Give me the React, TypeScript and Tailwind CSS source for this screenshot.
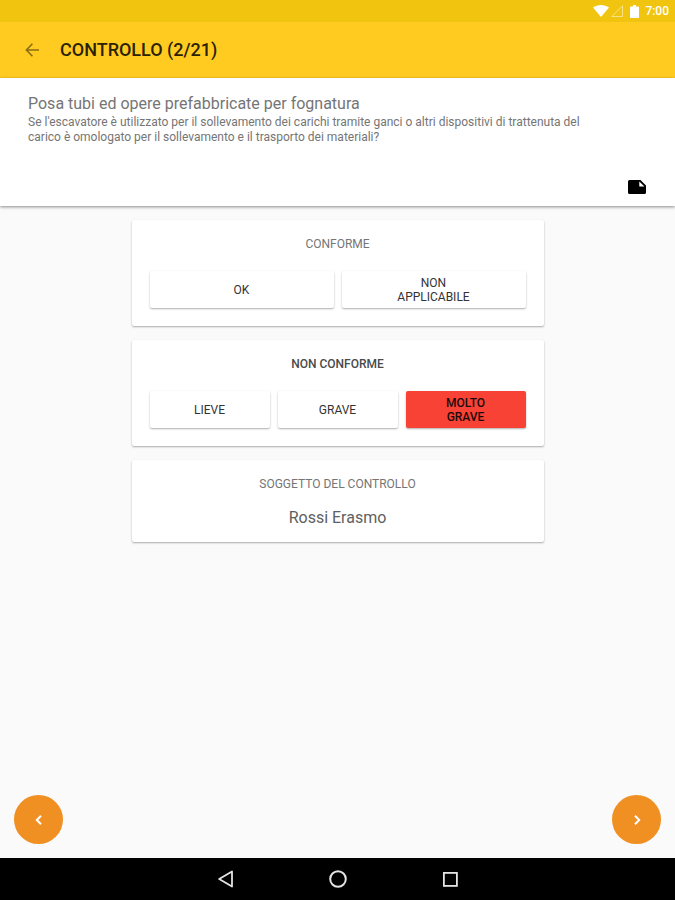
import type { ReactNode } from 'react';

interface ChoiceButtonProps {
  label: string;
  selected?: boolean;
}

interface CardProps {
  title: string;
  titleClassName?: string;
  children: ReactNode;
}

function ChoiceButton({ label, selected = false }: ChoiceButtonProps) {
  return (
    <button
      type="button"
      aria-pressed={selected}
      className={`flex h-[37px] flex-1 items-center justify-center rounded-xs text-center text-[12px] leading-[14px] shadow-[0_1px_2px_rgba(0,0,0,0.32)] ${
        selected ? 'bg-[#f94236] font-medium text-[#1c0a08]' : 'bg-white text-[#333333]'
      }`}
    >
      <span className="max-w-[76px]">{label}</span>
    </button>
  );
}

function Card({ title, titleClassName = 'text-[#757575]', children }: CardProps) {
  return (
    <section className="rounded-xs bg-white px-[18px] pt-[17px] shadow-[0_1px_2px_rgba(0,0,0,0.32)]">
      <h2 className={`text-center text-[12px] leading-[14px] ${titleClassName}`}>{title}</h2>
      {children}
    </section>
  );
}

function StatusBar() {
  return (
    <div className="flex h-[22px] items-center justify-end bg-[#f1c40f] pr-[6px] text-white">
      <svg className="h-3 w-4" viewBox="0 0 16 12" fill="currentColor" aria-hidden="true">
        <path d="M0 2.6C4.6-.8 11.4-.8 16 2.6L8 12Z" />
      </svg>
      <svg className="ml-[2px] h-3 w-3" viewBox="0 0 12 12" fill="none" stroke="currentColor" strokeOpacity="0.5" aria-hidden="true">
        <path d="M11.5 .8V11.5H.8Z" />
      </svg>
      <svg className="ml-[7px] h-[13px] w-[9px]" viewBox="0 0 9 13" fill="currentColor" aria-hidden="true">
        <path d="M3 0h3v1.4H8.3q.7 0 .7.7V12.3q0 .7-.7.7H.7Q0 13 0 12.3V2.1q0-.7.7-.7H3Z" />
      </svg>
      <span className="ml-[6px] text-[12px] font-medium leading-4">7:00</span>
    </div>
  );
}

function AppBar() {
  return (
    <header className="flex h-[56px] items-center bg-[#ffcb21] px-6">
      <button type="button" aria-label="Indietro" className="text-[#8a6d12]">
        <svg className="h-4 w-4" viewBox="0 0 16 16" fill="none" stroke="currentColor" strokeWidth="1.6" aria-hidden="true">
          <path d="M15 8H2.8M8.4 1.8L2.4 8l6 6.2" />
        </svg>
      </button>
      <h1 className="ml-5 text-[18px] font-medium leading-6 text-[#2b2204]">CONTROLLO (2/21)</h1>
    </header>
  );
}

function NavigationBar() {
  return (
    <nav className="flex h-[42px] items-center justify-center gap-24 bg-black text-[#e4e4e4]">
      <button type="button" aria-label="Indietro">
        <svg className="h-5 w-4" viewBox="0 0 16 20" fill="none" stroke="currentColor" strokeWidth="1.8" strokeLinejoin="round" aria-hidden="true">
          <path d="M14 2.5v15L1.2 10Z" />
        </svg>
      </button>
      <button type="button" aria-label="Home">
        <svg className="h-5 w-4 overflow-visible" viewBox="0 0 16 20" fill="none" stroke="currentColor" strokeWidth="2" aria-hidden="true">
          <circle cx="8" cy="10" r="7.8" />
        </svg>
      </button>
      <button type="button" aria-label="Recenti">
        <svg className="h-5 w-4" viewBox="0 0 16 20" fill="none" stroke="currentColor" strokeWidth="1.8" aria-hidden="true">
          <rect x="1.9" y="3.9" width="13" height="13" />
        </svg>
      </button>
    </nav>
  );
}

export default function App() {
  return (
    <div className="flex min-h-screen flex-col bg-[#fafafa] font-[Roboto,sans-serif]">
      <StatusBar />
      <AppBar />

      <section className="bg-white px-7 pb-[11px] pt-4 text-[#757575] shadow-[0_1px_3px_rgba(0,0,0,0.45)]">
        <h2 className="text-[16px] leading-5">Posa tubi ed opere prefabbricate per fognatura</h2>
        <p className="mt-px max-w-[570px] text-[12px] leading-[15px]">
          Se l'escavatore è utilizzato per il sollevamento dei carichi tramite ganci o altri dispositivi di trattenuta del
          carico è omologato per il sollevamento e il trasporto dei materiali?
        </p>
        <div className="mt-[34px] flex justify-end">
          <button type="button" aria-label="Nota" className="text-black">
            <svg className="h-4 w-5" viewBox="0 0 20 16" aria-hidden="true">
              <path
                fill="currentColor"
                fillRule="evenodd"
                d="M2.5 1H13.5L19 6.5V13.5Q19 15 17.5 15H2.5Q1 15 1 13.5V2.5Q1 1 2.5 1ZM12.3 2.4V7.5H17.4Z"
              />
            </svg>
          </button>
        </div>
      </section>

      <main className="mx-auto mt-[14px] flex w-full max-w-[412px] flex-1 flex-col gap-[14px]">
        <Card title="CONFORME">
          <div className="mt-5 flex gap-2 pb-[18px]">
            <ChoiceButton label="OK" />
            <ChoiceButton label="NON APPLICABILE" />
          </div>
        </Card>
        <Card title="NON CONFORME" titleClassName="font-medium text-[#4a4a4a]">
          <div className="mt-5 flex gap-2 pb-[18px]">
            <ChoiceButton label="LIEVE" />
            <ChoiceButton label="GRAVE" />
            <ChoiceButton label="MOLTO GRAVE" selected />
          </div>
        </Card>
        <Card title="SOGGETTO DEL CONTROLLO">
          <p className="pb-[14px] pt-[17px] text-center text-[16px] leading-5 text-[#606060]">Rossi Erasmo</p>
        </Card>
      </main>

      <div className="flex justify-between px-[14px] pb-[14px] text-white">
        <button type="button" aria-label="Precedente" className="flex size-[49px] items-center justify-center rounded-full bg-[#f09022]">
          <svg className="size-3" viewBox="0 0 12 12" fill="none" stroke="currentColor" strokeWidth="2" aria-hidden="true">
            <path d="M8 1.8L3.8 6L8 10.2" />
          </svg>
        </button>
        <button type="button" aria-label="Successivo" className="flex size-[49px] items-center justify-center rounded-full bg-[#f09022]">
          <svg className="size-3" viewBox="0 0 12 12" fill="none" stroke="currentColor" strokeWidth="2" aria-hidden="true">
            <path d="M4 1.8L8.2 6L4 10.2" />
          </svg>
        </button>
      </div>

      <NavigationBar />
    </div>
  );
}
